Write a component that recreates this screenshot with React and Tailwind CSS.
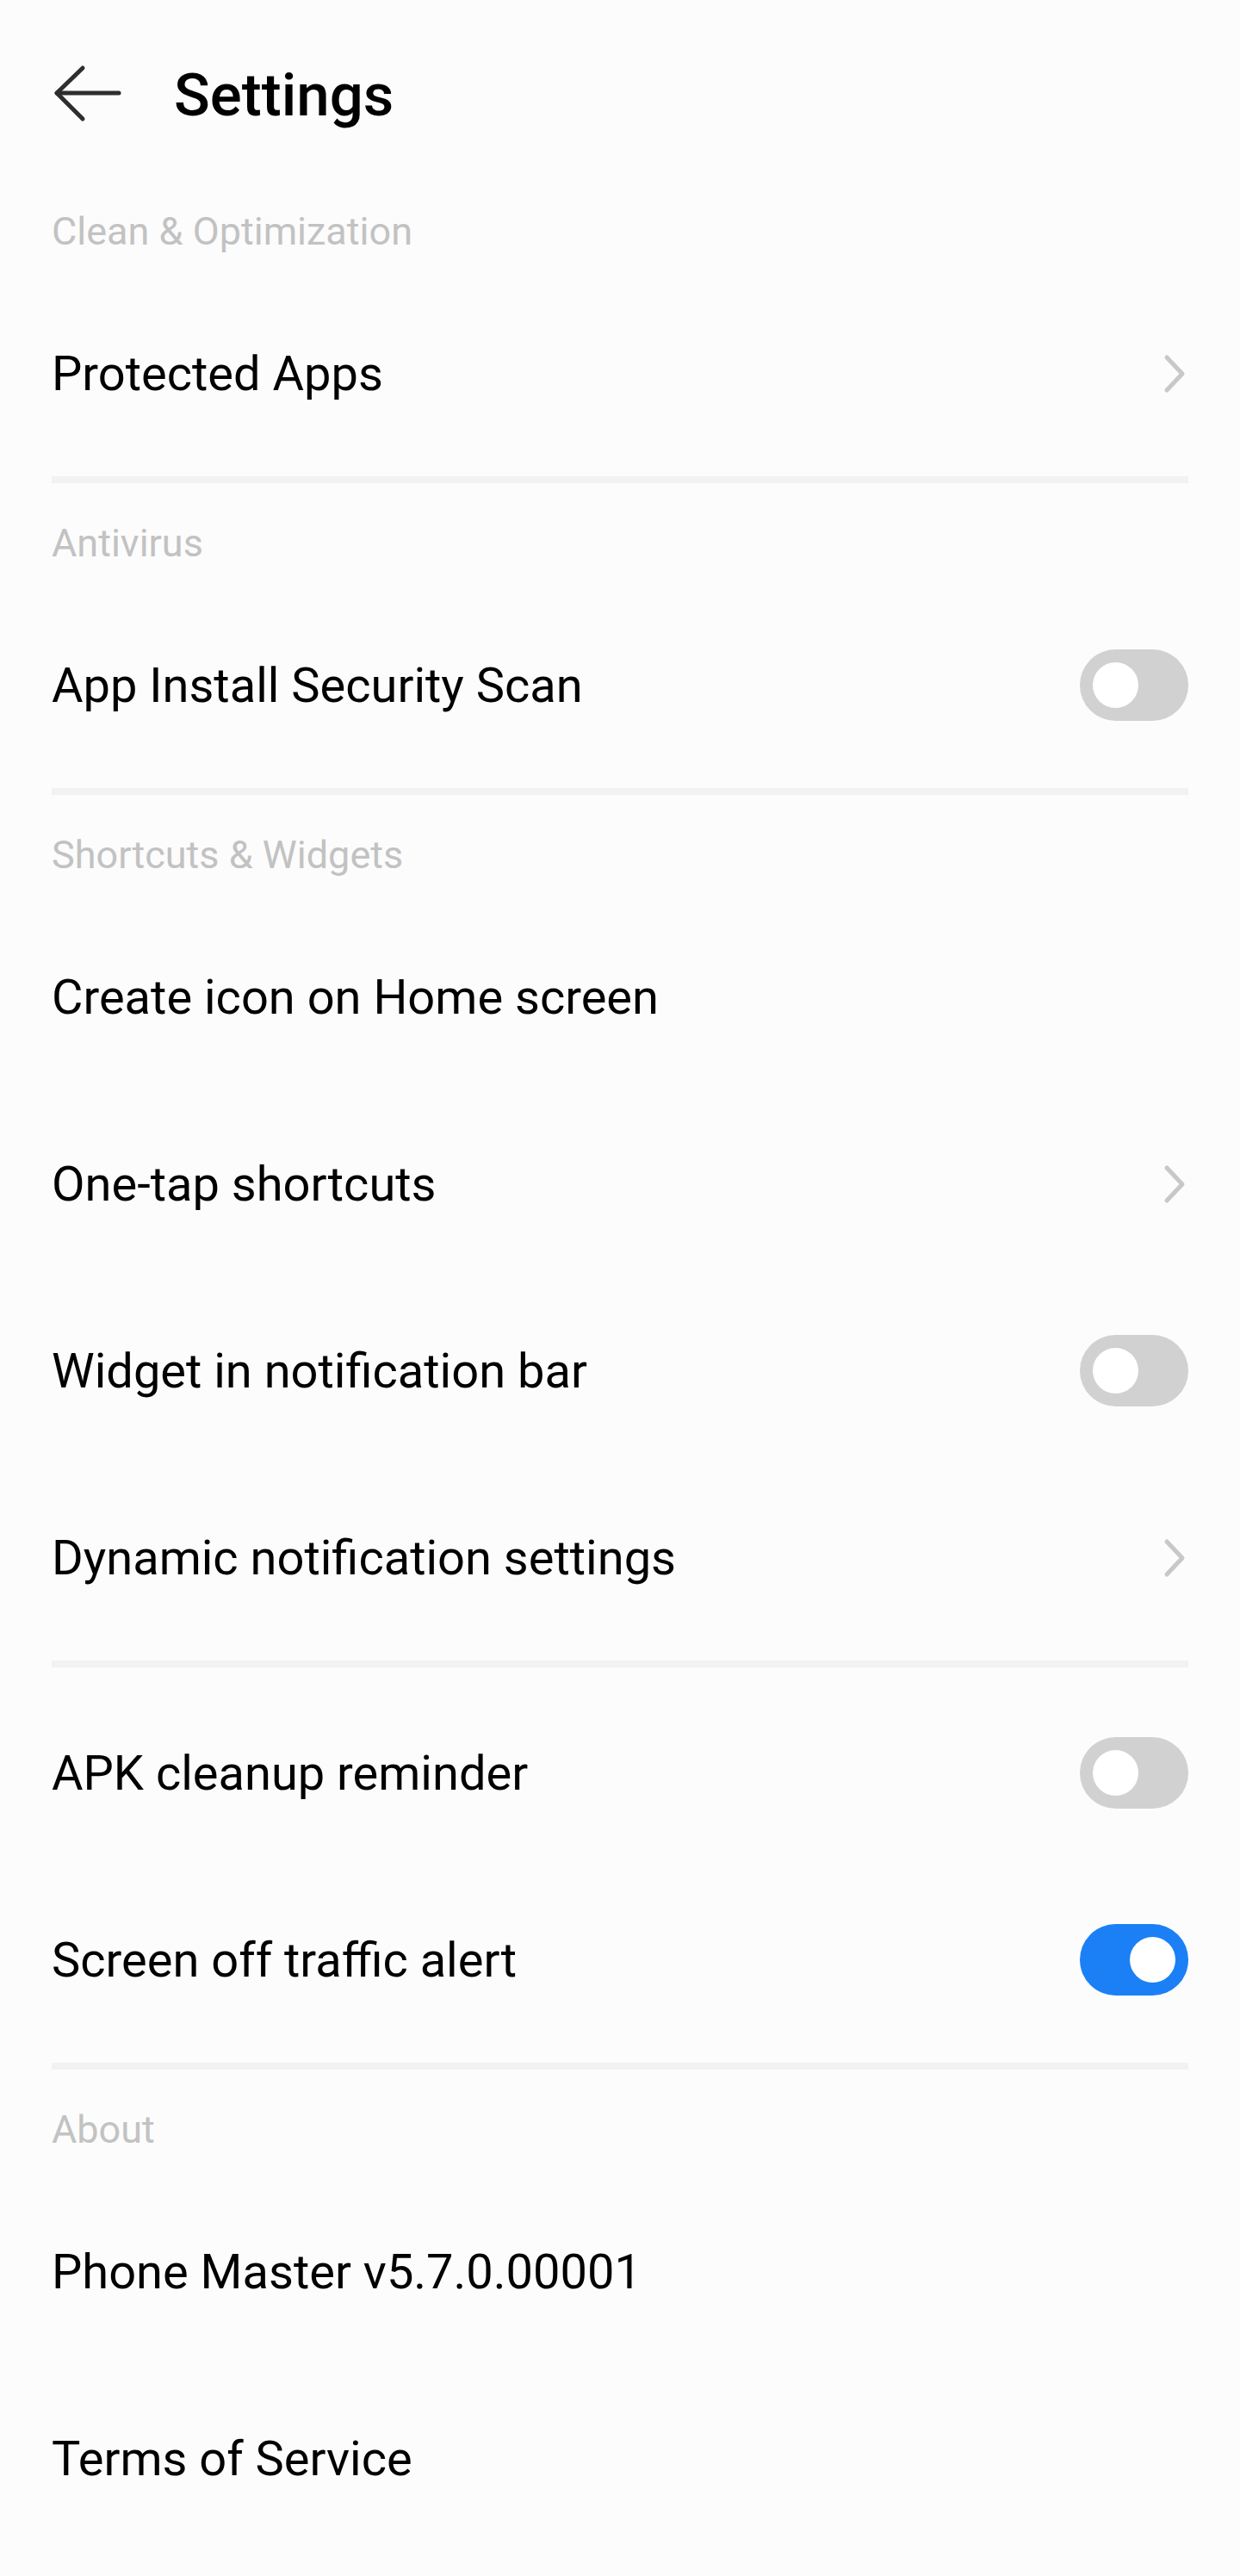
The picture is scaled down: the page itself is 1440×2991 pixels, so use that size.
import React from "react";

const sections = [
  {
    label: "Clean & Optimization",
    first: true,
    rows: [{ title: "Protected Apps", type: "chevron" }],
  },
  {
    label: "Antivirus",
    rows: [{ title: "App Install Security Scan", type: "toggle", on: false }],
  },
  {
    label: "Shortcuts & Widgets",
    rows: [
      { title: "Create icon on Home screen" },
      { title: "One-tap shortcuts", type: "chevron" },
      { title: "Widget in notification bar", type: "toggle", on: false },
      { title: "Dynamic notification settings", type: "chevron" },
    ],
  },
  {
    label: null,
    rows: [
      { title: "APK cleanup reminder", type: "toggle", on: false },
      { title: "Screen off traffic alert", type: "toggle", on: true },
    ],
  },
  {
    label: "About",
    last: true,
    rows: [{ title: "Phone Master v5.7.0.00001" }, { title: "Terms of Service" }],
  },
];

const Chevron = () => (
  <svg width="28" height="46" viewBox="0 0 28 46" fill="none" className="mr-[2px]">
    <path d="M5 4 L23 23 L5 42" stroke="#c8c8c8" strokeWidth="5" strokeLinecap="round" strokeLinejoin="round" />
  </svg>
);

const Toggle = ({ on }) => (
  <div
    className={`flex items-center w-[126px] h-[83px] rounded-full px-[15px] ${
      on ? "bg-[#1b80f6] justify-end" : "bg-[#d1d1d1] justify-start"
    }`}
  >
    <div className="w-[53px] h-[53px] rounded-full bg-white" />
  </div>
);

const Row = ({ title, type, on }) => (
  <div className="h-[217px] flex items-center justify-between">
    <span className="text-[56px] leading-[64px] text-black">{title}</span>
    {type === "chevron" && <Chevron />}
    {type === "toggle" && <Toggle on={on} />}
  </div>
);

export default function App() {
  return (
    <div
      className="min-h-screen bg-[#fcfcfc]"
      style={{ fontFamily: "Roboto, 'Noto Sans', sans-serif" }}
    >
      {/* top bar */}
      <div className="h-[218px] flex items-center px-[60px]">
        <svg width="84" height="70" viewBox="0 0 84 70" fill="none">
          <path d="M6 34 L78 34" stroke="#2e2e2e" strokeWidth="5" strokeLinecap="round" />
          <path d="M36 5 L6 34 L36 64" stroke="#2e2e2e" strokeWidth="5" strokeLinecap="round" strokeLinejoin="round" />
        </svg>
        <h1 className="ml-[58px] mt-[4px] text-[69px] leading-[76px] font-medium text-black">Settings</h1>
      </div>

      <div className="px-[60px]">
        {sections.map((section, i) => (
          <div key={i}>
            {section.label ? (
              <div
                className={`${section.first ? "pt-[23px]" : "pt-[42px]"} pb-[28px] text-[45px] leading-[56px] text-[#c2c2c2]`}
              >
                {section.label}
              </div>
            ) : (
              <div className="h-[14px]" />
            )}
            {section.rows.map((row) => (
              <Row key={row.title} {...row} />
            ))}
            {!section.last && (
              <>
                <div className="h-[11px]" />
                <div className="h-[8px] bg-[#f2f2f2]" />
              </>
            )}
          </div>
        ))}
      </div>
    </div>
  );
}
